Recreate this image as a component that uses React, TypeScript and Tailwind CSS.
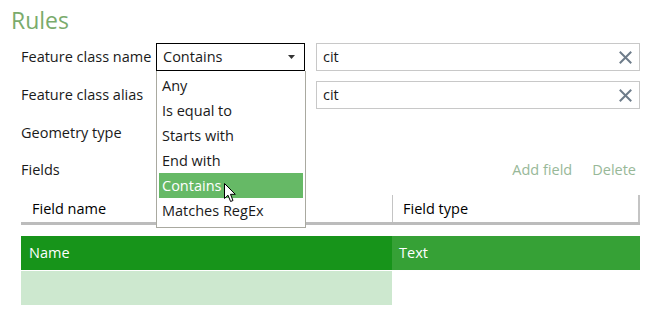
import React from "react";

const font = { fontFamily: '"Open Sans", "Noto Sans", sans-serif' };

function ClearIcon() {
  return (
    <svg width="13" height="13" viewBox="0 0 13 13" className="shrink-0">
      <path d="M1.5 1.5 L11.5 11.5 M11.5 1.5 L1.5 11.5" stroke="#6e7c8a" strokeWidth="2" strokeLinecap="square" />
    </svg>
  );
}

function Cursor() {
  return (
    <svg width="14" height="21" viewBox="0 0 14 21" className="absolute left-[224px] top-[183px]">
      <path d="M0.5 0.5 L0.5 15.5 L4 12.2 L6.6 18.5 L9 17.5 L6.5 11.3 L11.3 11.3 Z" fill="#ffffff" stroke="#000000" strokeWidth="1" strokeLinejoin="miter" />
    </svg>
  );
}

const items = ["Any", "Is equal to", "Starts with", "End with", "Contains", "Matches RegEx"];

export default function App() {
  return (
    <div className="relative w-[660px] h-[314px] bg-white text-[14.5px] text-[#1a1a1a] overflow-hidden" style={font}>
      <div className="flex flex-col pl-[21px] pr-[20px]">
        <div className="-ml-[10px] h-[43px] pt-[5px] text-[23px] leading-[30px] text-[#7aab6c]">Rules</div>

        <div className="flex items-center h-[28px]">
          <div className="w-[135px]">Feature class name</div>
          <div className="flex items-center justify-between w-[149px] h-[28px] border border-black pl-[6px] pr-[9px]">
            <span>Contains</span>
            <svg width="7" height="4" viewBox="0 0 7 4"><path d="M0 0 L7 0 L3.5 4 Z" fill="#333" /></svg>
          </div>
          <div className="ml-[11px] flex-1 flex items-center justify-between h-[28px] border border-[#c8c8c8] pl-[6px] pr-[7px]">
            <span>cit</span>
            <ClearIcon />
          </div>
        </div>

        <div className="flex items-center h-[28px] mt-[10px]">
          <div className="w-[135px]">Feature class alias</div>
          <div className="w-[149px]" />
          <div className="ml-[11px] flex-1 flex items-center justify-between h-[28px] border border-[#c8c8c8] pl-[6px] pr-[7px]">
            <span>cit</span>
            <ClearIcon />
          </div>
        </div>

        <div className="flex items-center h-[28px] mt-[10px]">
          <div>Geometry type</div>
        </div>

        <div className="flex items-center justify-between h-[28px] mt-[9px] pr-[4px]">
          <div>Fields</div>
          <div className="flex gap-[20px] text-[#98b898]">
            <span>Add field</span>
            <span>Delete</span>
          </div>
        </div>

        <div className="flex h-[30px] mt-[11px] border-b-[3px] border-[#bcbcbc]">
          <div className="w-[371px] flex items-center pl-[11px] text-black">Field name</div>
          <div className="flex-1 flex items-center pl-[10px] border-l border-r-2 border-[#c4c4c4] text-black">Field type</div>
        </div>

        <div className="flex h-[34px] mt-[11px] text-white">
          <div className="w-[371px] flex items-center pl-[8px] bg-[#17941a]">Name</div>
          <div className="flex-1 flex items-center pl-[7px] bg-[#36a136]">Text</div>
        </div>
        <div className="flex h-[34px] mt-[1px]">
          <div className="w-[371px] bg-[#cde8cf]" />
        </div>
      </div>

      <div className="absolute left-[156px] top-[71px] w-[150px] h-[157px] bg-white border border-t-0 border-[#a9a9a0] pt-[2px] px-[2px]">
        {items.map((it) => (
          <div
            key={it}
            className={"h-[25px] flex items-center pl-[3px] " + (it === "Contains" ? "bg-[#66b966] text-white" : "")}
          >
            {it}
          </div>
        ))}
      </div>
      <Cursor />
    </div>
  );
}
